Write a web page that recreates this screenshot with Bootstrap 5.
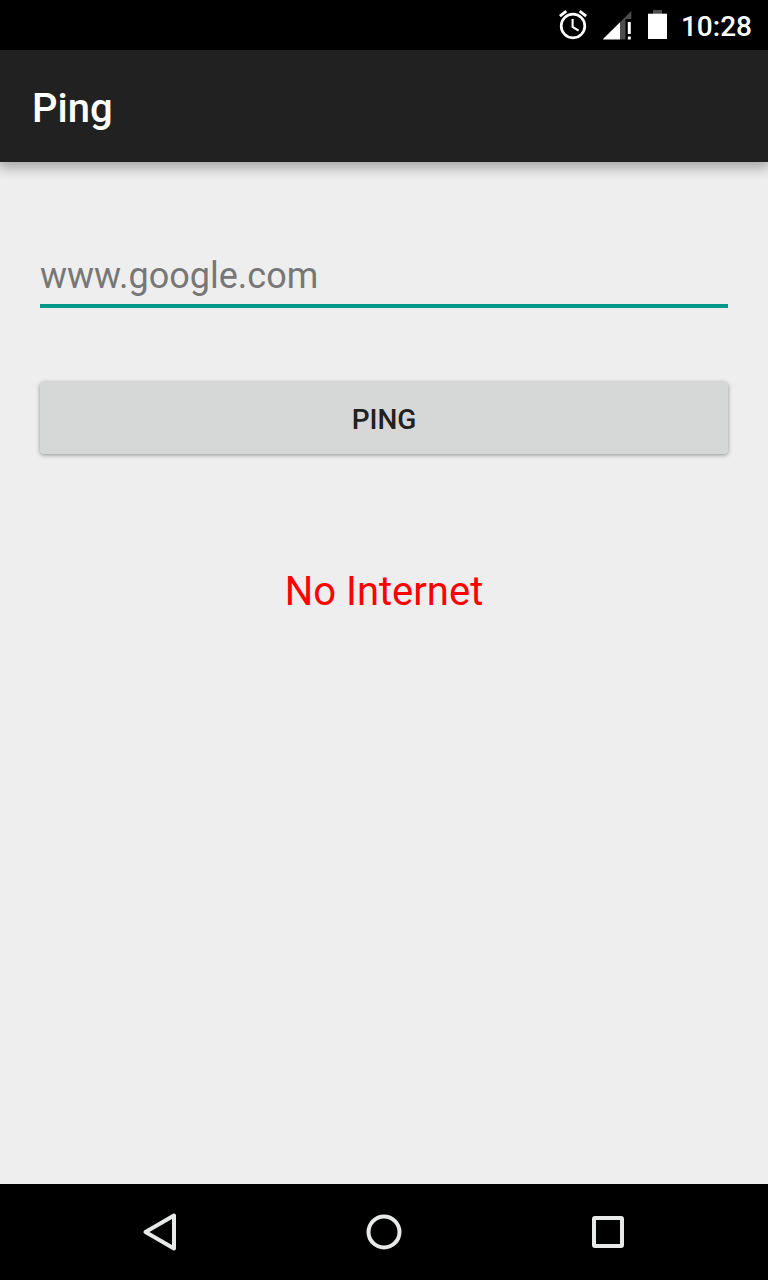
<!DOCTYPE html>
<html lang="en">
<head>
<meta charset="utf-8">
<meta name="viewport" content="width=device-width, initial-scale=1">
<title>Ping</title>
<link href="https://cdn.jsdelivr.net/npm/bootstrap@5.3.0/dist/css/bootstrap.min.css" rel="stylesheet">
<style>
  body { font-family: Roboto, "Liberation Sans", sans-serif; background: #eee; }
  .status-bar { height: 50px; padding: 0 16px; background: #000; font-size: 28px; line-height: 40px; }
  .status-icons { gap: 16px; margin-right: 14px; }
  .status-time { padding-top: 4px; }
  .app-bar { height: 112px; padding: 6px 32px 0; background: #212121; box-shadow: 0 4px 12px 2px rgba(0, 0, 0, .3); }
  .app-title { font-size: 40px; line-height: 48px; }
  .ping-form { padding: 80px 40px 0; }
  .host-field { height: 66px; padding: 6px 0 0; border: 0; border-bottom: 4px solid #009688; border-radius: 0; background: transparent; font-size: 36px; line-height: 56px; color: #212121; }
  .host-field::placeholder { color: #777; }
  .host-field:focus { background: transparent; border-color: #009688; box-shadow: none; }
  .ping-button { height: 72px; margin-top: 74px; padding: 4px 0 0; border: 0; border-radius: 4px; background: #d6d8d7; color: #212121; font-size: 28px; line-height: 40px; box-shadow: 0 1px 4px rgba(0, 0, 0, .4); }
  .ping-button:hover, .ping-button:active { background: #cbcdcc; color: #212121; }
  .ping-result { margin-top: 114px; color: #f00; font-size: 40px; line-height: 48px; }
  .system-nav { height: 96px; padding: 0 48px; background: #000; }
  .nav-key { border: 0; border-radius: 0; }
</style>
</head>
<body class="d-flex flex-column min-vh-100">
<div class="status-bar d-flex justify-content-end align-items-center text-white fw-medium">
  <div class="status-icons d-flex align-items-center">
    <svg width="28" height="30" viewBox="0 0 28 30" fill="none" stroke="#fff" role="img" aria-label="Alarm set">
      <circle cx="14" cy="16" r="11.8" stroke-width="2.7"/>
      <path d="M.9 6.1 7.3 1.2M20.7 1.2 27.1 6.1" stroke-width="2.9"/>
      <path d="M13.6 9v8l6 3.7" stroke-width="2.1"/>
    </svg>
    <svg width="29" height="30" viewBox="0 0 29 30" role="img" aria-label="No mobile signal">
      <path d="M17 12.3 28.3 1V9H22.5v20.6H17z" fill="#4d4d4d"/>
      <path d="M-.5 29.6 17 12.3v17.3zM24.8 12h3v12h-3zM24.8 26.4h3v3h-3z" fill="#fff"/>
    </svg>
    <svg width="19" height="30" viewBox="0 0 19 30" role="img" aria-label="Battery full">
      <path d="M5 0h9v4H5z" fill="#4d4d4d"/>
      <path d="M0 3.7h19V29H0z" fill="#fff"/>
    </svg>
  </div>
  <time class="status-time">10:28</time>
</div>
<header class="app-bar d-flex align-items-center">
  <h1 class="app-title m-0 text-white fw-medium">Ping</h1>
</header>
<main class="flex-grow-1">
  <form class="ping-form" onsubmit="return false">
    <input class="host-field form-control" type="text" placeholder="www.google.com" aria-label="Host address">
    <button class="ping-button btn w-100 fw-medium" type="submit">PING</button>
    <p class="ping-result mb-0 text-center" role="status">No Internet</p>
  </form>
</main>
<nav class="system-nav d-flex" aria-label="System navigation">
  <button class="nav-key btn p-0 flex-fill d-flex align-items-center justify-content-center" type="button" aria-label="Back">
    <svg width="36" height="40" viewBox="0 0 36 40" fill="none" stroke="#e8eaea" stroke-width="4" stroke-linejoin="round"><path d="M32 3.6v32.8L3.5 20z"/></svg>
  </button>
  <button class="nav-key btn p-0 flex-fill d-flex align-items-center justify-content-center" type="button" aria-label="Home">
    <svg width="36" height="36" viewBox="0 0 36 36" fill="none" stroke="#e8eaea" stroke-width="4"><circle cx="18" cy="18" r="15.5"/></svg>
  </button>
  <button class="nav-key btn p-0 flex-fill d-flex align-items-center justify-content-center" type="button" aria-label="Recent apps">
    <svg width="36" height="36" viewBox="0 0 36 36" fill="none" stroke="#e8eaea" stroke-width="4"><rect x="4" y="4" width="28" height="28" rx="1"/></svg>
  </button>
</nav>
<script src="https://cdn.jsdelivr.net/npm/bootstrap@5.3.0/dist/js/bootstrap.bundle.min.js"></script>
</body>
</html>
